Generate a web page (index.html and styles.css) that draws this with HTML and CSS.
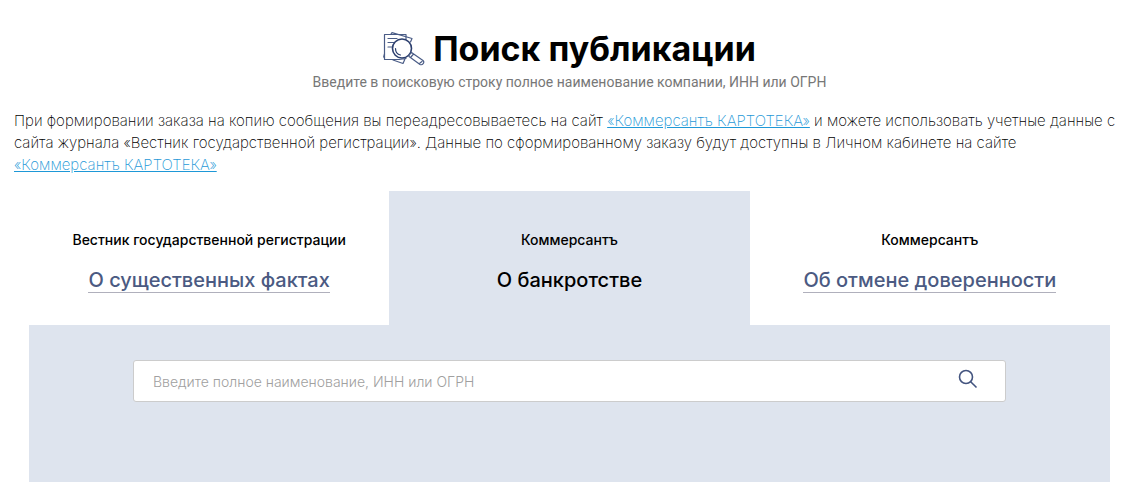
FILE: index.html
```html
<!DOCTYPE html>
<html lang="ru">
<head>
    <meta charset="UTF-8">
    <meta name="viewport" content="width=device-width, initial-scale=1.0">
    <title>Поиск публикации</title>
    <link rel="stylesheet" href="styles.css">
</head>
<body>

<main class="search-page">
    <!-- Title -->
    <header class="page-header">
        <h1 class="page-title">
            <svg class="title-icon" viewBox="0 0 42 34" fill="none" stroke="#4a5c86" stroke-width="1.2" stroke-linejoin="round" stroke-linecap="round" aria-hidden="true">
                <path d="M23 7V2.500H1.500V27.500H16"/>
                <path d="M8 2L9 .6L29 6.500L27.500 10"/>
                <path d="M1.500 22L.7 25L1.500 25.500"/>
                <path d="M10 28L20 31.500L22 27M16 27.500L23 26.500"/>
                <path d="M5 6.500H14M5 10.500H11M5 15H9"/>
                <circle cx="19" cy="16.500" r="9.500" fill="#fff" stroke="#2c3f6e" stroke-width="1.600"/>
                <path d="M12.500 16.500C12.500 20 14.500 22.500 17.500 23" stroke="#2c3f6e"/>
                <path d="M26 23L28.500 20.500L40 28.500C42 30.500 39.500 33.500 37 32.500L26 24.500ZM28 25L30.500 22M37 31L39 29.500"/>
            </svg>
            Поиск публикации
        </h1>
        <p class="page-subtitle">Введите в поисковую строку полное наименование компании, ИНН или ОГРН</p>
    </header>

    <p class="notice">При формировании заказа на копию сообщения вы переадресовываетесь на сайт <a href="#">«Коммерсантъ КАРТОТЕКА»</a> и можете использовать учетные данные с сайта журнала «Вестник государственной регистрации». Данные по сформированному заказу будут доступны в Личном кабинете на сайте <a href="#">«Коммерсантъ КАРТОТЕКА»</a></p>

    <section class="search-block">
        <!-- Tabs -->
        <nav class="tabs">
            <div class="tab">
                <span class="tab-source">Вестник государственной регистрации</span>
                <a class="tab-link" href="#">О существенных фактах</a>
            </div>
            <div class="tab active">
                <span class="tab-source">Коммерсантъ</span>
                <a class="tab-link" href="#" aria-current="page">О банкротстве</a>
            </div>
            <div class="tab">
                <span class="tab-source">Коммерсантъ</span>
                <a class="tab-link" href="#">Об отмене доверенности</a>
            </div>
        </nav>

        <!-- Search form -->
        <div class="search-panel">
            <form class="search-form" role="search">
                <input class="search-input" type="text" aria-label="Полное наименование, ИНН или ОГРН" placeholder="Введите полное наименование, ИНН или ОГРН">
                <button class="search-btn" type="submit" aria-label="Найти">
                    <svg viewBox="0 0 20 20" width="20" height="20" fill="none" stroke="#43547f" stroke-width="1.600" aria-hidden="true">
                        <circle cx="8" cy="8" r="6.500"/>
                        <path d="M12.700 12.700L18.500 18.500"/>
                    </svg>
                </button>
            </form>
        </div>
    </section>
</main>

</body>
</html>
```
FILE: styles.css
```css
* {
    box-sizing: border-box;
}

body {
    margin: 0;
    font-family: Inter, "Liberation Sans", sans-serif;
    background: #fff;
    color: #000;
}

.search-page {
    padding: 28px 14px 18px;
}

/* Title */
.page-header {
    text-align: center;
}

.page-title {
    display: flex;
    justify-content: center;
    align-items: center;
    gap: 8px;
    margin: 0;
    font-size: 34px;
    line-height: 42px;
    font-weight: 700;
}

.title-icon {
    width: 42px;
    height: 34px;
}

.page-subtitle {
    margin: 2px 0 0;
    font-family: Roboto, "Liberation Sans", sans-serif;
    font-size: 14px;
    line-height: 20px;
    color: #777;
}

.notice {
    margin: 18px 0 15px;
    font-size: 15px;
    line-height: 22px;
    font-weight: 200;
    color: #000;
}

.notice a {
    color: #1e98d7;
}

/* Tabs */
.search-block {
    margin: 0 15px;
}

.tabs {
    display: grid;
    grid-template-columns: repeat(3, 1fr);
}

.tab {
    display: flex;
    flex-direction: column;
    align-items: center;
    gap: 18px;
    padding: 39px 10px 32px;
}

.tab.active {
    background: #dee4ee;
}

.tab-source {
    font-size: 14px;
    line-height: 20px;
    font-weight: 500;
}

.tab-link {
    font-size: 20px;
    line-height: 24px;
    font-weight: 500;
    color: #4b5a82;
    text-decoration: none;
    border-bottom: 1px solid #b0b0bc;
}

.tab.active .tab-link {
    color: #000;
    border-color: transparent;
}

/* Search form */
.search-panel {
    padding: 35px 104px 80px;
    background: #dee4ee;
}

.search-form {
    display: flex;
    height: 42px;
    background: #fff;
    border: 1px solid #ccc;
    border-radius: 3px;
}

.search-input {
    flex: 1;
    min-width: 0;
    padding: 0 19px;
    border: 0;
    background: none;
    font-family: inherit;
    font-size: 14px;
    font-weight: 300;
    outline: none;
}

.search-input::placeholder {
    color: #a0a0a0;
    opacity: 1;
}

.search-btn {
    display: flex;
    align-items: center;
    justify-content: center;
    width: 74px;
    padding: 0 0 4px;
    border: 0;
    background: none;
    cursor: pointer;
}
```
